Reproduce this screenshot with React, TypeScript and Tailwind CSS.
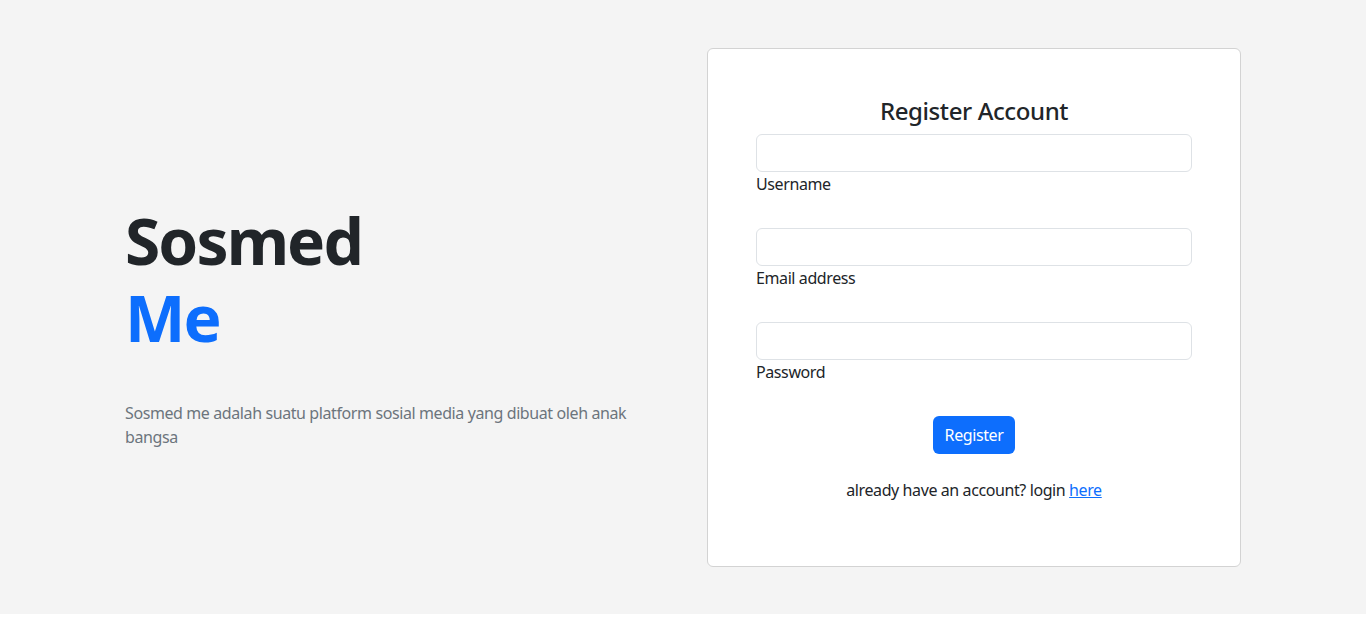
import React from "react";

const font = { fontFamily: '"Segoe UI", "Noto Sans", "Open Sans", sans-serif' };

function Field({ label, type }: { label: string; type: string }) {
  return (
    <div className="mb-8">
      <input
        type={type}
        className="block w-full h-[38px] rounded-[6px] border border-[#dee2e6] bg-white px-3 outline-none"
      />
      <label className="block text-[16px] leading-6 text-[#212529]">{label}</label>
    </div>
  );
}

export default function App() {
  return (
    <div style={font} className="min-h-[641px] bg-white tracking-[-0.025em]">
      <div className="h-[614px] bg-[#f4f4f4] flex">
        <div className="w-[582px] pl-[125px] flex flex-col justify-center pt-[38px]">
          <h1 className="text-[64px] leading-[1.2] font-bold text-[#212529] tracking-[-0.03em]">
            <span className="block">Sosmed</span>
            <span className="block text-[#0d6efd]">Me</span>
          </h1>
          <p className="mt-[45px] text-[16px] leading-6 text-[#6c757d] w-[520px]">
            Sosmed me adalah suatu platform sosial media yang dibuat oleh anak bangsa
          </p>
        </div>
        <div className="ml-[125px] pt-[48px]">
          <div className="w-[534px] h-[519px] bg-white border border-[#d3d3d3] rounded-[6px] px-[48px] pt-[48px]">
            <h4 className="text-center text-[24px] leading-[1.2] font-medium text-[#212529] mb-2">
              Register Account
            </h4>
            <Field label="Username" type="text" />
            <Field label="Email address" type="email" />
            <Field label="Password" type="password" />
            <div className="flex justify-center">
              <button className="h-[38px] px-3 rounded-[6px] bg-[#0d6efd] text-white text-[16px]">
                Register
              </button>
            </div>
            <p className="mt-6 text-center text-[16px] leading-6 text-[#212529]">
              already have an account? login{" "}
              <a href="#" className="text-[#0d6efd] underline">
                here
              </a>
            </p>
          </div>
        </div>
      </div>
    </div>
  );
}
